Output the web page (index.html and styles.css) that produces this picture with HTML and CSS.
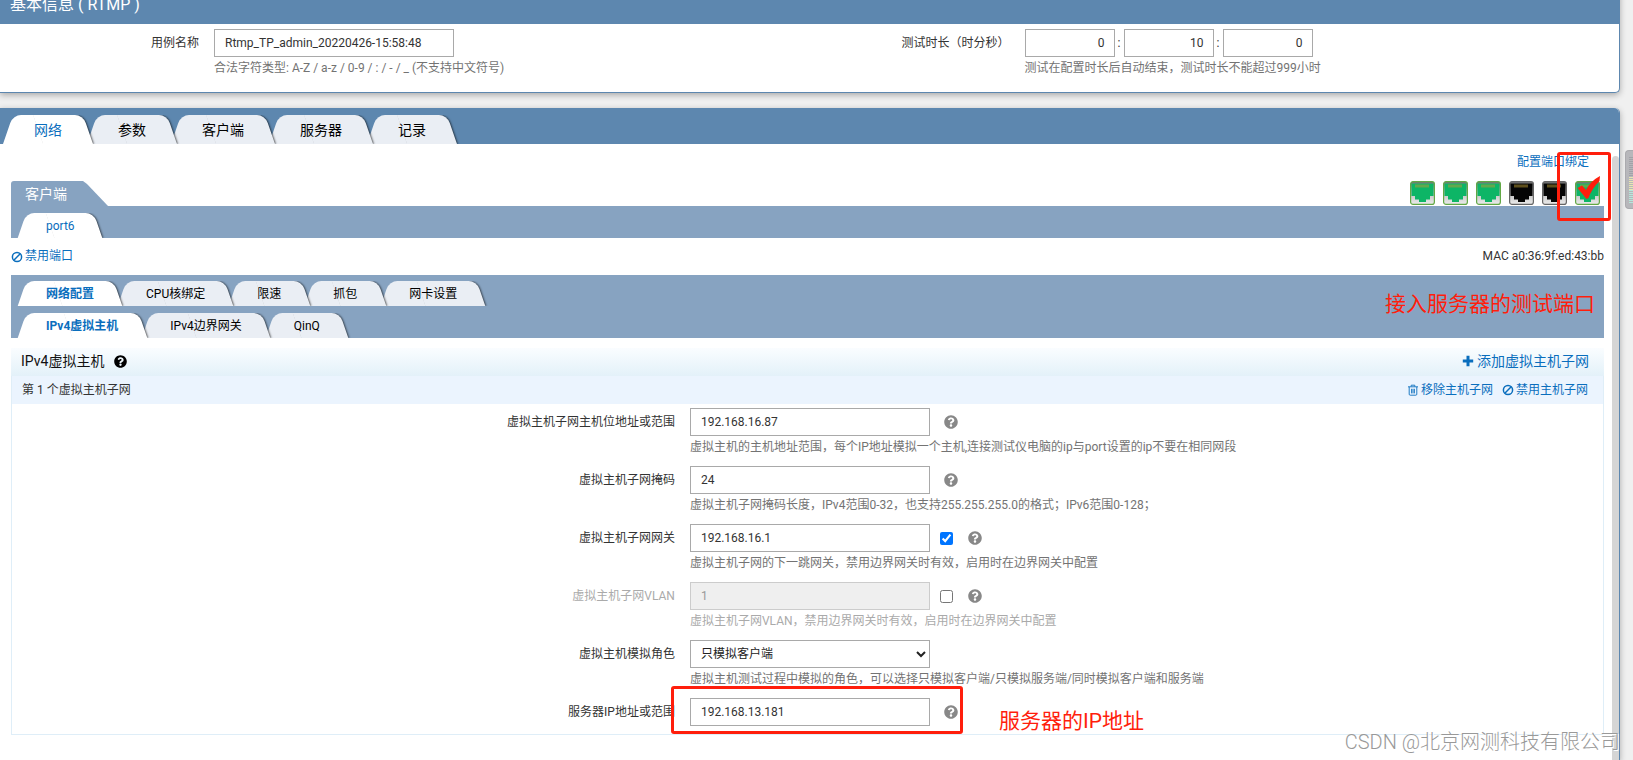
FILE: index.html
```html
<!DOCTYPE html>
<html lang="zh-CN">
<head>
<meta charset="utf-8">
<title>RTMP</title>
<link rel="stylesheet" href="styles.css">
</head>
<body>
<svg class="defs" width="0" height="0" aria-hidden="true">
  <defs>
    <linearGradient id="metal" x1="0" y1="0" x2="0" y2="1"><stop offset="0" stop-color="#6f6f6f"/><stop offset=".45" stop-color="#bdbdbd"/><stop offset="1" stop-color="#ececec"/></linearGradient>
  </defs>
  <symbol id="help" viewBox="0 0 512 512"><path fill="currentColor" d="M504 256c0 136.997-111.043 248-248 248S8 392.997 8 256C8 119.083 119.043 8 256 8s248 111.083 248 248zM262.655 90c-54.497 0-89.255 22.957-116.549 63.758-3.536 5.286-2.353 12.415 2.715 16.258l34.699 26.31c5.205 3.947 12.621 3.008 16.665-2.122 17.864-22.658 30.113-35.797 57.303-35.797 20.429 0 45.698 13.148 45.698 32.958 0 14.976-12.363 22.667-32.534 33.976C247.128 238.528 216 254.941 216 296v4c0 6.627 5.373 12 12 12h56c6.627 0 12-5.373 12-12v-1.333c0-28.462 83.186-29.647 83.186-106.667 0-58.002-60.165-102-116.531-102zM256 338c-25.365 0-46 20.635-46 46 0 25.364 20.635 46 46 46s46-20.636 46-46c0-25.365-20.635-46-46-46z"/></symbol>
  <symbol id="ban" viewBox="0 0 12 12"><circle cx="6" cy="6" r="4.6" fill="none" stroke="currentColor" stroke-width="1.5"/><path d="M2.8 9.2 9.2 2.8" stroke="currentColor" stroke-width="1.5"/></symbol>
  <symbol id="trash" viewBox="0 0 12 12"><path d="M1 2.8h10M4.2 2.5V1.2h3.6v1.3M2.2 3v7.2q0 1 1 1h5.6q1 0 1-1V3M4.6 4.8v4.6M6 4.8v4.6M7.4 4.8v4.6" fill="none" stroke="currentColor" stroke-width=".9"/></symbol>
  <symbol id="plus" viewBox="0 0 12 12"><path d="M6 .8v10.4M.8 6h10.4" stroke="currentColor" stroke-width="3"/></symbol>
  <symbol id="jack" viewBox="0 0 25 24">
    <rect x=".6" y=".6" width="23.8" height="22.8" rx="2.5" fill="url(#metal)" stroke="currentColor" stroke-width="1.2"/>
    <path d="M1.5 2.500h22v12.500h-3.500v3.500h-4V21H9v-2.500H5V15H1.500z"/>
    <path d="M5.500 5h14" stroke="#b99a35" stroke-width="3" stroke-dasharray="1 1"/>
  </symbol>
</svg>

<section class="panel basic">
  <h2 class="basic-title">基本信息 ( RTMP )</h2>
  <div class="basic-body">
    <div class="basic-field">
      <label for="case-name">用例名称</label>
      <div>
        <input class="box" id="case-name" type="text" value="Rtmp_TP_admin_20220426-15:58:48">
        <p class="hint">合法字符类型: A-Z / a-z / 0-9 / : / - / _ (不支持中文符号)</p>
      </div>
    </div>
    <div class="basic-field">
      <label for="hours">测试时长（时分秒）</label>
      <div>
        <div class="duration">
          <input class="box" id="hours" type="text" value="0"><span>:</span><input class="box" type="text" aria-label="分" value="10"><span>:</span><input class="box" type="text" aria-label="秒" value="0">
        </div>
        <p class="hint">测试在配置时长后自动结束，测试时长不能超过999小时</p>
      </div>
    </div>
  </div>
</section>

<section class="panel main">
  <nav class="tabs top-tabs">
    <a class="tab active" href="#network"><span>网络</span></a>
    <a class="tab" href="#params"><span>参数</span></a>
    <a class="tab" href="#client"><span>客户端</span></a>
    <a class="tab" href="#server"><span>服务器</span></a>
    <a class="tab" href="#record"><span>记录</span></a>
  </nav>
  <div class="main-body">
    <div class="content">
      <div class="port-head">
        <h3 class="side-tab">客户端</h3>
        <div class="port-tools">
          <a class="bind" href="#bind">配置端口绑定</a>
          <div class="jacks">
            <button class="jack up" aria-label="port1"><svg><use href="#jack"/></svg></button>
            <button class="jack up" aria-label="port2"><svg><use href="#jack"/></svg></button>
            <button class="jack up" aria-label="port3"><svg><use href="#jack"/></svg></button>
            <button class="jack" aria-label="port4"><svg><use href="#jack"/></svg></button>
            <button class="jack" aria-label="port5"><svg><use href="#jack"/></svg></button>
            <button class="jack up" aria-label="port6"><svg><use href="#jack"/></svg><svg class="tick" viewBox="0 0 24 24"><path d="M1 12 5.500 9.500 9.500 14Q14 5 23.500 0L23 5Q15 13 12 22L10 23Z" fill="#ff1e0c"/></svg></button>
          </div>
          <div class="mark mark-port"></div>
        </div>
      </div>
      <nav class="tabs small-tabs port-row"><a class="tab active" href="#port6"><span>port6</span></a></nav>
      <div class="port-info">
        <a class="action" href="#disable-port"><svg><use href="#ban"/></svg>禁用端口</a>
        <span>MAC a0:36:9f:ed:43:bb</span>
      </div>
      <div class="config-bar">
        <nav class="tabs small-tabs">
          <a class="tab active strong" href="#net-config"><span>网络配置</span></a>
          <a class="tab" href="#cpu"><span>CPU核绑定</span></a>
          <a class="tab" href="#rate"><span>限速</span></a>
          <a class="tab" href="#capture"><span>抓包</span></a>
          <a class="tab" href="#nic"><span>网卡设置</span></a>
        </nav>
        <nav class="tabs small-tabs">
          <a class="tab active strong" href="#ipv4-host"><span>IPv4虚拟主机</span></a>
          <a class="tab" href="#ipv4-gw"><span>IPv4边界网关</span></a>
          <a class="tab" href="#qinq"><span>QinQ</span></a>
        </nav>
        <p class="note note-port">接入服务器的测试端口</p>
      </div>
      <header class="host-title">
        <h3>IPv4虚拟主机 <svg><use href="#help"/></svg></h3>
        <a class="action large" href="#add"><svg><use href="#plus"/></svg>添加虚拟主机子网</a>
      </header>
      <div class="subnet">
        <div class="subnet-head">
          <span>第 1 个虚拟主机子网</span>
          <div class="subnet-actions">
            <a class="action" href="#remove"><svg><use href="#trash"/></svg>移除主机子网</a>
            <a class="action" href="#disable"><svg><use href="#ban"/></svg>禁用主机子网</a>
          </div>
        </div>
        <form class="form">
          <div class="row">
            <label for="addr">虚拟主机子网主机位地址或范围</label>
            <div class="control"><input class="box" id="addr" type="text" value="192.168.16.87"><svg class="help"><use href="#help"/></svg></div>
            <p class="hint">虚拟主机的主机地址范围，每个IP地址模拟一个主机,连接测试仪电脑的ip与port设置的ip不要在相同网段</p>
          </div>
          <div class="row">
            <label for="mask">虚拟主机子网掩码</label>
            <div class="control"><input class="box" id="mask" type="text" value="24"><svg class="help"><use href="#help"/></svg></div>
            <p class="hint">虚拟主机子网掩码长度，IPv4范围0-32，也支持255.255.255.0的格式；IPv6范围0-128；</p>
          </div>
          <div class="row">
            <label for="gateway">虚拟主机子网网关</label>
            <div class="control"><input class="box" id="gateway" type="text" value="192.168.16.1"><input class="check" type="checkbox" aria-label="启用网关" checked><svg class="help"><use href="#help"/></svg></div>
            <p class="hint">虚拟主机子网的下一跳网关，禁用边界网关时有效，启用时在边界网关中配置</p>
          </div>
          <div class="row off">
            <label for="vlan">虚拟主机子网VLAN</label>
            <div class="control"><input class="box" id="vlan" type="text" value="1" disabled><input class="check" type="checkbox" aria-label="启用VLAN"><svg class="help"><use href="#help"/></svg></div>
            <p class="hint">虚拟主机子网VLAN，禁用边界网关时有效，启用时在边界网关中配置</p>
          </div>
          <div class="row">
            <label for="role">虚拟主机模拟角色</label>
            <div class="control"><select class="box" id="role"><option>只模拟客户端</option><option>只模拟服务端</option></select></div>
            <p class="hint">虚拟主机测试过程中模拟的角色，可以选择只模拟客户端/只模拟服务端/同时模拟客户端和服务端</p>
          </div>
          <div class="row">
            <label for="server-ip">服务器IP地址或范围</label>
            <div class="control"><input class="box" id="server-ip" type="text" value="192.168.13.181"><svg class="help"><use href="#help"/></svg>
              <div class="mark mark-ip"></div>
              <p class="note note-ip">服务器的IP地址</p>
            </div>
          </div>
        </form>
      </div>
    </div>
    <div class="scroll"></div>
  </div>
</section>
<div class="page-thumb"></div>
<p class="credit">CSDN @北京网测科技有限公司</p>
</body>
</html>
```
FILE: styles.css
```css
* { box-sizing: border-box; }

body {
  margin: 0;
  min-height: 100vh;
  padding-right: 13px;
  display: flex;
  flex-direction: column;
  gap: 15px;
  position: relative;
  overflow: hidden;
  background: #f0f0f0;
  color: #333;
  font: 12px/20px Roboto, "Noto Sans CJK SC", sans-serif;
}

h2, h3, p { margin: 0; font-weight: 400; }
a { color: #0a6ebd; text-decoration: none; }
.defs { position: absolute; }

.panel {
  background: #fff;
  border-right: 1px solid #5d87af;
  box-shadow: 0 2px 6px rgba(0, 0, 0, .3);
}

/* Basic information */
.basic {
  margin-top: -12px;
  border-bottom: 1px solid #5d87af;
  border-radius: 0 0 5px 0;
}
.basic-title {
  height: 36px;
  padding-left: 10px;
  background: #5d87af;
  color: #fff;
  font-size: 16px;
  line-height: 34px;
}
.basic-body {
  display: grid;
  grid-template-columns: 1fr 1fr;
  column-gap: 2px;
  padding: 5px 0 13px;
}
.basic-field {
  display: grid;
  grid-template-columns: 199px 1fr;
  gap: 15px;
}
.basic-field label { text-align: right; line-height: 28px; }
.duration { display: flex; }
.duration span { width: 9px; text-align: center; line-height: 28px; }
.duration .box { width: 90px; padding-right: 9px; text-align: right; }

.box {
  display: block;
  width: 240px;
  height: 28px;
  margin: 0;
  padding: 0 10px;
  border: 1px solid #a9a9a9;
  border-radius: 0;
  background: #fff;
  color: #333;
  font: inherit;
}
select.box { padding: 0 1px 0 6px; color: #222; }
.box:disabled { background: #efefef; border-color: #ccc; color: #999; }
.hint { color: #737373; line-height: 22px; white-space: nowrap; }

/* Slanted tabs */
.main {
  flex: 1;
  display: flex;
  flex-direction: column;
  border-radius: 0 5px 0 0;
}
.tabs { display: flex; align-items: flex-end; isolation: isolate; }
.tab {
  position: relative;
  padding: 0 26px;
  height: 25px;
  line-height: 26px;
  overflow: visible;
  color: #000;
}
.tab::before, .tab::after {
  content: "";
  position: absolute;
  top: 0;
  bottom: 0;
  background: #eaeef4;
}
.tab::before {
  left: 2px;
  width: 60%;
  border-radius: 8px 0 0 0;
  transform: skewX(-19deg);
}
.tab::after {
  right: 2px;
  width: 60%;
  border-radius: 0 8px 0 0;
  transform: skewX(19deg);
  box-shadow: 1px 0 2px rgba(0, 0, 0, .6);
  clip-path: inset(0 -6px 0 0);
}
.tab span { position: relative; z-index: 1; }
.tab:nth-child(1) { z-index: 5; }
.tab:nth-child(2) { z-index: 4; }
.tab:nth-child(3) { z-index: 3; }
.tab:nth-child(4) { z-index: 2; }
.tab:nth-child(5) { z-index: 1; }
.tab.active { color: #0a6ebd; }
.tab.active::before, .tab.active::after { background: #fff; }
.strong { font-weight: 700; }

.top-tabs {
  height: 36px;
  padding-left: 6px;
  background: #5d87af;
  border-radius: 0 5px 0 0;
}
.top-tabs .tab {
  height: 29px;
  padding: 0 28px;
  font-size: 14px;
  line-height: 30px;
}
.small-tabs { height: 32px; padding-left: 9px; background: #87a3c1; }

/* Port area */
.main-body { flex: 1; display: flex; gap: 8px; padding-left: 11px; }
.content { flex: 1; min-width: 0; }
.scroll {
  width: 7px;
  margin-top: 12px;
  background: #d5d5d5;
  border-radius: 4px 4px 0 0;
}
.port-head {
  display: flex;
  justify-content: space-between;
  align-items: flex-end;
}
.side-tab {
  width: 97px;
  height: 25px;
  padding-left: 14px;
  background: #87a3c1;
  border-radius: 3px 0 0 0;
  clip-path: polygon(0 0, 72px 0, 76px 3px, 97px 100%, 0 100%);
  color: #fff;
  font-size: 14px;
  line-height: 26px;
}
.port-tools {
  position: relative;
  display: flex;
  flex-direction: column;
  align-items: flex-end;
  gap: 9px;
  padding: 8px 4px 1px 0;
}
.bind { margin-right: 11px; }
.jacks { display: flex; gap: 8px; }
.jack {
  position: relative;
  width: 25px;
  height: 24px;
  padding: 0;
  border: 0;
  background: none;
  color: #666;
  fill: #050505;
}
.jack.up { color: #62a845; fill: #0db566; }
.jack svg { display: block; width: 25px; height: 24px; }
.jack .tick { position: absolute; top: -5px; left: 1px; }

.mark {
  position: absolute;
  z-index: 10;
  border: 3px solid #ff1e0c;
  border-radius: 3px;
  pointer-events: none;
}
.mark-port { top: 8px; right: -7px; width: 54px; height: 69px; }
.note {
  position: absolute;
  color: #ff1e0c;
  font-size: 21px;
  line-height: 30px;
  white-space: nowrap;
}

.port-info {
  display: flex;
  justify-content: space-between;
  height: 37px;
  line-height: 37px;
}
.action { display: inline-flex; align-items: center; gap: 2px; }
.action svg { width: 12px; height: 12px; }
.action.large { gap: 3px; font-size: 14px; }

.config-bar { position: relative; }
.config-bar .small-tabs:first-child { height: 31px; }
.note-port { top: 14px; right: 9px; }

/* Virtual hosts */
.host-title {
  display: flex;
  justify-content: space-between;
  align-items: center;
  height: 28px;
  margin-top: 10px;
  padding: 0 15px 2px 10px;
  background: linear-gradient(#fafdff, #e3f1f9);
}
.host-title h3 {
  display: flex;
  align-items: center;
  gap: 10px;
  color: #111;
  font-size: 14px;
}
.host-title h3 svg { width: 13px; height: 13px; color: #000; }
.subnet { border: 1px solid #dfeef8; border-top: 0; }
.subnet-head {
  display: flex;
  justify-content: space-between;
  height: 28px;
  padding: 0 15px 0 10px;
  background: #ebf4fe;
  line-height: 28px;
}
.subnet-actions { display: flex; gap: 9px; }

.form { display: grid; gap: 8px; padding: 4px 0 8px; }
.row {
  display: grid;
  grid-template-columns: 41.667% 1fr;
  column-gap: 15px;
}
.row label { text-align: right; line-height: 28px; }
.row .hint { grid-column: 2; }
.control { position: relative; display: flex; align-items: center; }
.help { width: 14px; height: 14px; margin-left: 14px; color: #888; }
.check { width: 13px; height: 13px; margin: 0 0 0 10px; }
.check + .help { margin-left: 15px; }
.off label, .off .hint { color: #aaa; }
.mark-ip { top: -12px; left: -19px; width: 292px; height: 48px; }
.note-ip { top: 8px; left: 309px; }

/* Page edge */
.page-thumb {
  position: absolute;
  top: 150px;
  right: 0;
  width: 8px;
  height: 59px;
  border: 1px solid #aaaaae;
  border-width: 1px 0 1px 1px;
  border-radius: 4px 0 0 4px;
  background:
    repeating-linear-gradient(#e8e6b0 0 1px, #b7b7bb 1px 2px) 3px 26px / 5px 13px no-repeat,
    repeating-linear-gradient(#b5e8dc 0 1px, #b7b7bb 1px 2px) 3px 39px / 5px 13px no-repeat,
    repeating-linear-gradient(#a2a2a8 0 1px, #b7b7bb 1px 2px) 3px 6px / 5px 20px no-repeat,
    #b7b7bb;
}
.credit {
  position: absolute;
  right: 13px;
  bottom: 3px;
  color: #999;
  font-size: 20px;
  font-weight: 300;
  line-height: 30px;
  text-shadow: 1px 1px 0 #fff;
}
```
